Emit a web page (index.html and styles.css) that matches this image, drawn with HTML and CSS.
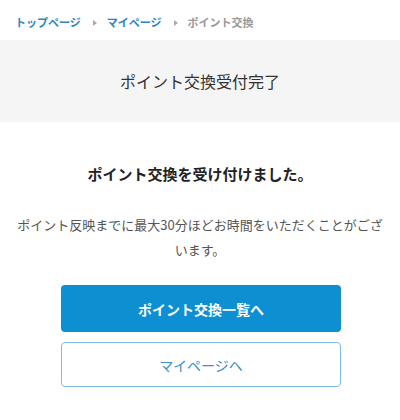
FILE: index.html
```html
<!DOCTYPE html>
<html lang="ja">
<head>
  <meta charset="UTF-8">
  <title>ポイント交換受付完了</title>
  <link rel="stylesheet" href="styles.css">
</head>
<body>

  <nav class="breadcrumb">
    <a href="#">トップページ</a>
    <span class="sep"></span>
    <a href="#">マイページ</a>
    <span class="sep"></span>
    <span class="current">ポイント交換</span>
  </nav>

  <div class="page-title">
    <h1>ポイント交換受付完了</h1>
  </div>

  <div class="content">
    <h2>ポイント交換を受け付けました。</h2>
    <p>ポイント反映までに最大30分ほどお時間をいただくことがございます。</p>

    <div class="actions">
      <a href="#" class="btn btn-primary">ポイント交換一覧へ</a>
      <a href="#" class="btn btn-outline">マイページへ</a>
    </div>
  </div>

</body>
</html>
```

FILE: styles.css
```css
body {
  margin: 0;
  font-family: "Noto Sans CJK JP", "Noto Sans", sans-serif;
  color: #333;
  background: #fff;
}

.breadcrumb {
  display: flex;
  align-items: center;
  box-sizing: border-box;
  height: 40px;
  padding: 4px 15px 0;
  font-size: 11px;
  font-weight: bold;
}

.breadcrumb a {
  color: #2a87c4;
  text-decoration: none;
}

.breadcrumb .sep {
  width: 0;
  height: 0;
  margin: 1px 10px 0 12px;
  border-left: 4px solid #aaa;
  border-top: 3px solid transparent;
  border-bottom: 3px solid transparent;
}

.breadcrumb .current {
  color: #999;
}

.page-title {
  background: #f5f5f5;
  height: 82px;
  display: flex;
  align-items: center;
  justify-content: center;
}

.page-title h1 {
  margin: 0;
  font-size: 16px;
  font-weight: normal;
  color: #333;
}

.content {
  padding: 39px 14px 0;
  text-align: center;
}

.content h2 {
  margin: 0;
  font-size: 15px;
  font-weight: bold;
  color: #222;
  line-height: 26px;
}

.content p {
  margin: 25px 0 0;
  font-size: 13px;
  line-height: 25px;
  color: #555;
}

.actions {
  display: flex;
  flex-direction: column;
  gap: 10px;
  width: 280px;
  margin: 23px auto 0;
  padding-left: 2px;
}

.btn {
  display: flex;
  align-items: center;
  justify-content: center;
  box-sizing: border-box;
  border-radius: 4px;
  font-size: 14px;
  text-decoration: none;
}

.btn-primary {
  height: 47px;
  background: #0d8fd2;
  color: #fff;
  font-weight: bold;
}

.btn-outline {
  height: 45px;
  border: 1px solid #7fbfe0;
  color: #3a90c8;
}
```
